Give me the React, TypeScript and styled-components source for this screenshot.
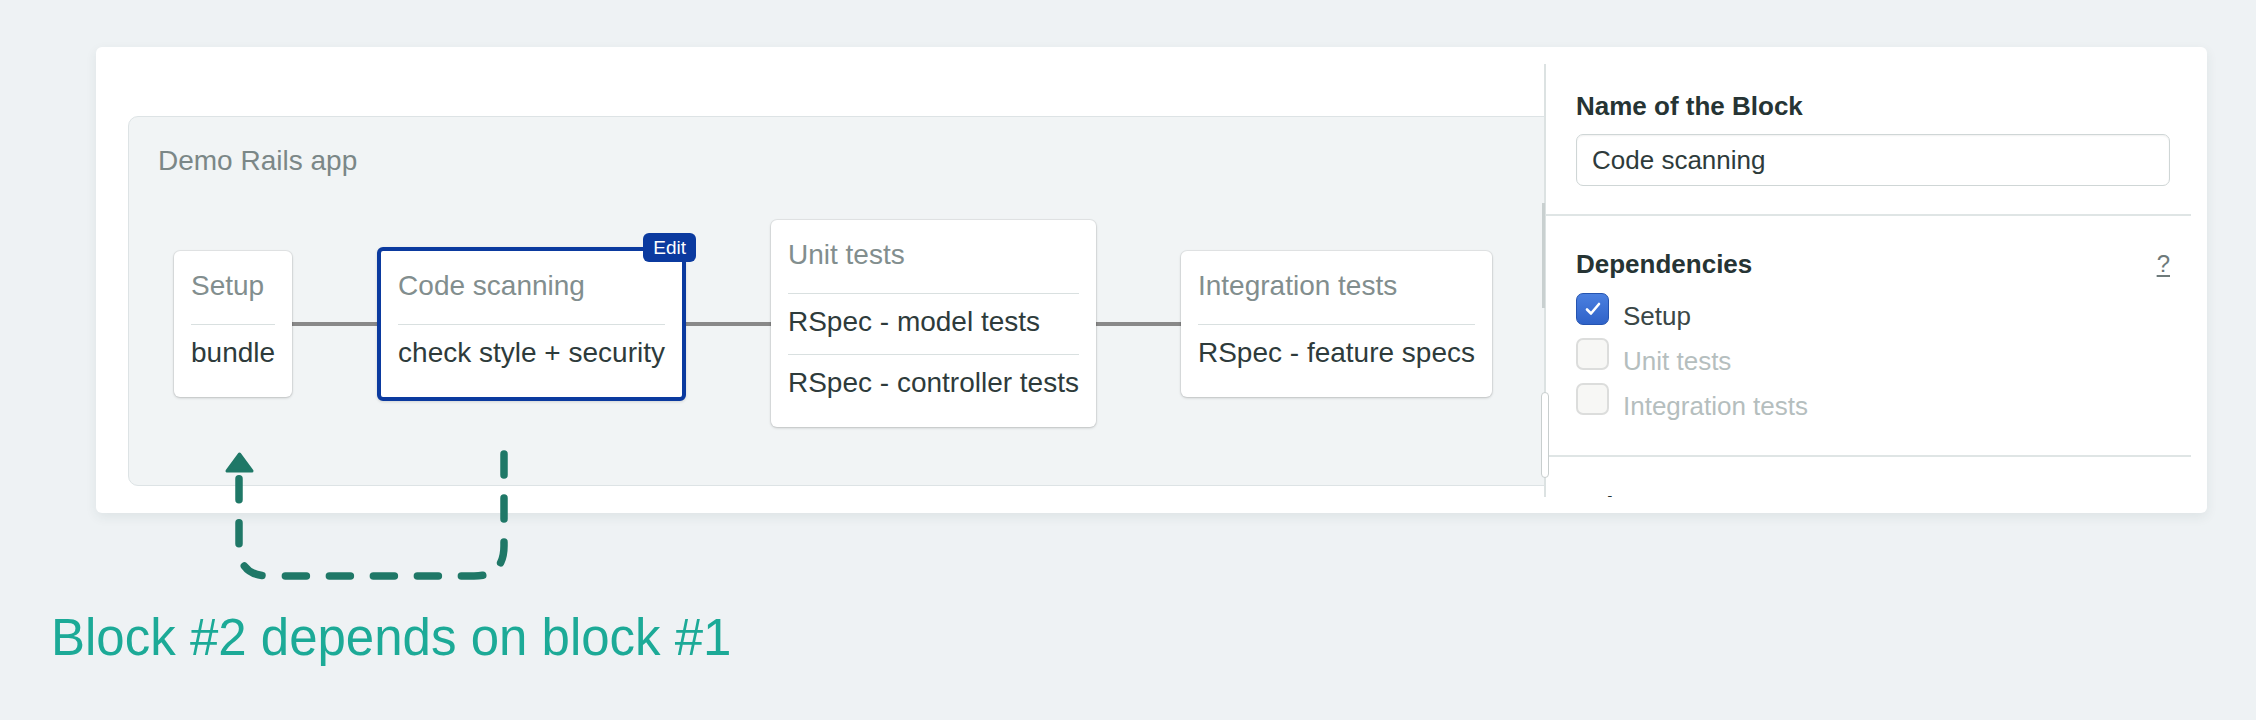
import React from "react";
import styled, { createGlobalStyle } from "styled-components";

const Global = createGlobalStyle`
  html, body { margin: 0; padding: 0; background: #eef2f4; }
  body { font-family: "Liberation Sans", Arial, sans-serif; }
  * { box-sizing: border-box; }
`;

const Page = styled.div`
  position: relative;
  width: 2256px;
  height: 720px;
  padding-top: 47px;
  overflow: hidden;
`;

const Card = styled.div`
  position: relative;
  margin-left: 96px;
  width: 2111px;
  height: 466px;
  background: #fff;
  border-radius: 6px;
  box-shadow: 0 4px 12px rgba(40, 60, 70, 0.08);
  padding: 17px 16px 16px 0;
  display: flex;
`;

const Canvas = styled.div`
  flex: 1;
  min-width: 0;
  overflow: hidden;
  padding: 52px 0 0 32px;
`;

const Pipeline = styled.div`
  margin-right: -24px;
  height: 370px;
  background: #f1f4f5;
  border: 1px solid #dde3e5;
  border-radius: 10px;
  padding: 26px 0 0 29px;
`;

const PipelineTitle = styled.div`
  font-size: 28px;
  line-height: 36px;
  color: #7b8787;
`;

const BlockRow = styled.div`
  display: flex;
  align-items: center;
  margin-top: 41px;
  padding-left: 16px;
`;

const Block = styled.div<{ $selected?: boolean }>`
  position: relative;
  flex-shrink: 0;
  background: #fff;
  border-radius: 6px;
  padding: 0 17px 12px;
  border: ${(p) => (p.$selected ? "4px solid #0b3a9f" : "none")};
  box-shadow: ${(p) =>
    p.$selected
      ? "0 1px 3px rgba(0,0,0,0.12)"
      : "0 0 0 1px rgba(0,0,0,0.05), 0 1px 3px rgba(0,0,0,0.18)"};
`;

const BlockTitle = styled.div`
  padding: 17px 0 20px;
  font-size: 28px;
  line-height: 36px;
  color: #828e8e;
  white-space: nowrap;
`;

const Job = styled.div`
  border-top: 1px solid #d9e0e0;
  padding: 10px 0 14px;
  font-size: 28px;
  line-height: 36px;
  color: #2e3b3b;
  white-space: nowrap;
`;

const Connector = styled.div`
  flex-shrink: 0;
  width: 85px;
  height: 4px;
  background: #898989;
`;

const EditBadge = styled.div`
  position: absolute;
  top: -18px;
  right: -14px;
  height: 29px;
  padding: 0 10px;
  border-radius: 6px;
  background: #0b3a9f;
  color: #fff;
  font-size: 19px;
  line-height: 29px;
`;

const Sidebar = styled.div`
  flex-shrink: 0;
  width: 647px;
  border-left: 2px solid #dce2e2;
  overflow: hidden;
`;

const Section = styled.div<{ $top: number; $bottom: number; $last?: boolean }>`
  padding: ${(p) => p.$top}px 21px ${(p) => p.$bottom}px 30px;
  border-bottom: ${(p) => (p.$last ? "none" : "2px solid #dfe5e5")};
`;

const SectionHeader = styled.div`
  display: flex;
  justify-content: space-between;
  align-items: center;
  font-size: 26px;
  line-height: 32px;
  font-weight: 700;
  color: #263434;
`;

const Help = styled.span`
  font-size: 24px;
  font-weight: 400;
  color: #6e7a7a;
  text-decoration: underline;
  text-underline-offset: 3px;
`;

const NameInput = styled.input`
  display: block;
  width: 100%;
  height: 52px;
  margin-top: 12px;
  border: 1px solid #cfd6d6;
  border-radius: 7px;
  padding: 0 15px;
  font-family: "Liberation Sans", Arial, sans-serif;
  font-size: 26px;
  color: #2e3b3b;
  background: #fff;
  box-shadow: inset 0 1px 2px rgba(0, 0, 0, 0.06);
  outline: none;
`;

const CheckRow = styled.div<{ $first?: boolean }>`
  display: flex;
  align-items: flex-start;
  gap: 14px;
  margin-top: ${(p) => (p.$first ? 13 : 6)}px;
`;

const Box = styled.div<{ $checked?: boolean }>`
  width: 33px;
  height: 32px;
  border-radius: 7px;
  display: flex;
  align-items: center;
  justify-content: center;
  background: ${(p) =>
    p.$checked ? "linear-gradient(#4b80e0, #2f62c8)" : "#f7f7f5"};
  border: ${(p) => (p.$checked ? "1.5px solid #2554b0" : "2px solid #dcdddc")};
`;

const CheckLabel = styled.span<{ $checked?: boolean }>`
  padding-top: 7px;
  font-size: 26px;
  line-height: 32px;
  color: ${(p) => (p.$checked ? "#3a4747" : "#b5bebe")};
`;

const ScrollTrack = styled.div`
  position: absolute;
  left: 1446px;
  top: 156px;
  width: 3px;
  height: 105px;
  background: #c9d0d0;
`;

const ScrollThumb = styled.div`
  position: absolute;
  left: 1445px;
  top: 345px;
  width: 8px;
  height: 86px;
  border: 1px solid #c8cece;
  border-radius: 4px;
  background: #fff;
`;

const Annotation = styled.svg`
  position: absolute;
  left: 220px;
  top: 440px;
`;

const Caption = styled.div`
  margin: 95px 0 0 51px;
  font-family: "Liberation Sans", Arial, sans-serif;
  font-size: 51px;
  line-height: 60px;
  color: #1caa97;
`;

type BlockData = { title: string; jobs: string[]; selected?: boolean };

const blocks: BlockData[] = [
  { title: "Setup", jobs: ["bundle"] },
  { title: "Code scanning", jobs: ["check style + security"], selected: true },
  { title: "Unit tests", jobs: ["RSpec - model tests", "RSpec - controller tests"] },
  { title: "Integration tests", jobs: ["RSpec - feature specs"] },
];

const deps = [
  { label: "Setup", checked: true },
  { label: "Unit tests", checked: false },
  { label: "Integration tests", checked: false },
];

export default function App() {
  return (
    <Page>
      <Global />
      <Card>
        <Canvas>
          <Pipeline>
            <PipelineTitle>Demo Rails app</PipelineTitle>
            <BlockRow>
              {blocks.map((b, i) => (
                <React.Fragment key={b.title}>
                  {i > 0 && <Connector />}
                  <Block $selected={b.selected}>
                    {b.selected && <EditBadge>Edit</EditBadge>}
                    <BlockTitle>{b.title}</BlockTitle>
                    {b.jobs.map((j) => (
                      <Job key={j}>{j}</Job>
                    ))}
                  </Block>
                </React.Fragment>
              ))}
            </BlockRow>
          </Pipeline>
        </Canvas>
        <Sidebar>
          <Section $top={26} $bottom={28}>
            <SectionHeader>Name of the Block</SectionHeader>
            <NameInput readOnly value="Code scanning" />
          </Section>
          <Section $top={32} $bottom={33}>
            <SectionHeader>
              <span>Dependencies</span>
              <Help>?</Help>
            </SectionHeader>
            {deps.map((d, i) => (
              <CheckRow key={d.label} $first={i === 0}>
                <Box $checked={d.checked}>
                  {d.checked && (
                    <svg width="20" height="20" viewBox="0 0 20 20">
                      <path
                        d="M4 10.5 L8 14.5 L16 5"
                        fill="none"
                        stroke="#fff"
                        strokeWidth="2.6"
                        strokeLinecap="round"
                        strokeLinejoin="round"
                      />
                    </svg>
                  )}
                </Box>
                <CheckLabel $checked={d.checked}>{d.label}</CheckLabel>
              </CheckRow>
            ))}
          </Section>
          <Section $top={33} $bottom={20} $last>
            <SectionHeader>Jobs</SectionHeader>
          </Section>
        </Sidebar>
        <ScrollTrack />
        <ScrollThumb />
      </Card>
      <Annotation width="300" height="150" viewBox="0 0 300 150">
        <path
          d="M284 14 V106 Q284 136 254 136 H49 Q19 136 19 106 V31"
          fill="none"
          stroke="#1f7867"
          strokeWidth="7.5"
          strokeLinecap="round"
          strokeDasharray="21 23"
        />
        <polygon
          points="19.5,14 7,31 32,31"
          fill="#1f7867"
          stroke="#1f7867"
          strokeWidth="3"
          strokeLinejoin="round"
        />
      </Annotation>
      <Caption>Block #2 depends on block #1</Caption>
    </Page>
  );
}
